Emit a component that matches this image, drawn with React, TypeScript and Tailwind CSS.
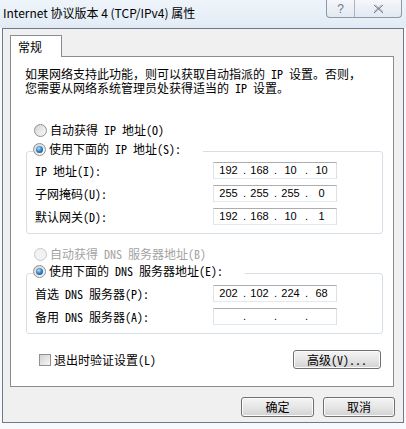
import React from "react";

const cjk = "font-['Noto_Sans_Mono_CJK_SC','Noto_Sans_CJK_SC',monospace]";

function Radio({ checked, disabled }: { checked?: boolean; disabled?: boolean }) {
  return (
    <span
      className={`flex h-[13px] w-[13px] shrink-0 items-center justify-center rounded-full border ${
        disabled
          ? "border-[#c8c8c8] bg-[#f2f2f2]"
          : "border-[#8e8f8f] bg-linear-to-br from-[#d4d4d4] to-[#fbfbfb]"
      }`}
    >
      {checked && (
        <span className="h-[7px] w-[7px] rounded-full bg-[radial-gradient(circle_at_40%_35%,#b6e1fb,#3a86c8_45%,#0d3a6c)]" />
      )}
    </span>
  );
}

function Checkbox() {
  return (
    <span className="h-[12px] w-[12px] shrink-0 border border-[#8e8f8f] bg-linear-to-br from-[#d2d2d2] to-[#f6f6f6]" />
  );
}

function IpBox({ parts }: { parts: string[] }) {
  return (
    <div className="flex h-[17px] w-[124px] items-center border border-[#abadb3] border-b-[#e3e9ef] border-l-[#e2e3ea] border-r-[#dbdfe6] bg-white pl-[1px] font-['Liberation_Sans',sans-serif] text-[11px] text-black">
      {parts.map((p, i) => (
        <React.Fragment key={i}>
          {i > 0 && <span className="w-[4px] text-right leading-none">.</span>}
          <span className="w-[27px] text-center leading-none">{p}</span>
        </React.Fragment>
      ))}
    </div>
  );
}

function Field({ label, parts }: { label: string; parts: string[] }) {
  return (
    <div className="flex h-[17px] items-center justify-between pl-[8px] pr-[45px]">
      <span>{label}</span>
      <IpBox parts={parts} />
    </div>
  );
}

function Button({ children, className }: { children: React.ReactNode; className?: string }) {
  return (
    <button
      className={`flex h-[19px] items-center justify-center rounded-[3px] border border-[#707070] bg-linear-to-b from-[#f4f4f4] via-[#e6e6e6] to-[#d2d2d2] text-[12px] text-black shadow-[inset_0_0_0_1px_#fbfbfb] ${className ?? ""}`}
    >
      {children}
    </button>
  );
}

function GroupBox({ legend, children }: { legend: React.ReactNode; children: React.ReactNode }) {
  return (
    <fieldset className="ml-[15px] w-[357px] rounded-[3px] border border-[#d5dfe5] pb-[8px]">
      <legend className="ml-[6px] h-[20px] pr-[22px]">
        <span className="flex h-[16px] items-center gap-[3px] bg-white">{legend}</span>
      </legend>
      {children}
    </fieldset>
  );
}

export default function App() {
  return (
    <div className={`h-[429px] w-[406px] overflow-hidden bg-[#f7f9fc] text-[12px] text-black ${cjk}`}>
      {/* title bar */}
      <div className="flex h-[28px] items-start bg-linear-to-b from-[#eef4fa] to-[#e2ebf5] pl-[3px]">
        <span className="mt-[5px] font-['Noto_Sans_CJK_SC',sans-serif] text-[12px] leading-[16px] text-black">
          Internet 协议版本 4 (TCP/IPv4) 属性
        </span>
        <div className="ml-auto mr-[4px] flex h-[18px] overflow-hidden rounded-b-[4px] border border-t-0 border-[#8d98a8] bg-linear-to-b from-[#f4f7fb] to-[#e3e9f1]">
          <span className="flex w-[28px] items-center justify-center border-r border-[#a9b3c1] font-['Liberation_Sans',sans-serif] text-[12px] text-[#6c7787]">
            ?
          </span>
          <span className="flex w-[46px] items-center justify-center">
            <svg width="11" height="10" viewBox="0 0 11 10" fill="none" stroke="#6c7787" strokeWidth="1">
              <path d="M1 1 L10 9 M10 1 L1 9" />
              <path d="M2.5 1 L10 7.5 M8.5 1 L1 7.5" strokeOpacity="0.5" />
            </svg>
          </span>
        </div>
      </div>

      {/* dialog body */}
      <div className="mx-[2px] flex h-[395px] flex-col border border-[#6f7a88] bg-[#f0f0f0] pl-[7px] pt-[6px]">
        {/* tab strip */}
        <div className="relative z-10 -mb-[1px] flex h-[22px] w-[52px] items-center border border-b-0 border-[#898c95] bg-white pl-[7px]">
          常规
        </div>

        {/* tab page */}
        <div className="flex h-[331px] w-[384px] flex-col border border-[#898c95] bg-white">
          <p className="pl-[14px] pt-[10px] leading-[14px]">
            如果网络支持此功能，则可以获取自动指派的 IP 设置。否则，
            <br />
            您需要从网络系统管理员处获得适当的 IP 设置。
          </p>

          <div className="ml-[23px] mt-[27px] flex h-[16px] items-center gap-[3px]">
            <Radio />
            <span>自动获得 IP 地址(O)</span>
          </div>

          <div className="mt-[3px]">
            <GroupBox
              legend={
                <>
                  <Radio checked />
                  <span>使用下面的 IP 地址(S):</span>
                </>
              }
            >
              <div className="mt-[1px] flex flex-col gap-[6px]">
                <Field label="IP 地址(I):" parts={["192", "168", "10", "10"]} />
                <Field label="子网掩码(U):" parts={["255", "255", "255", "0"]} />
                <Field label="默认网关(D):" parts={["192", "168", "10", "1"]} />
              </div>
            </GroupBox>
          </div>

          <div className="ml-[23px] mt-[12px] flex h-[16px] items-center gap-[3px] text-[#a3a3a3]">
            <Radio disabled />
            <span>自动获得 DNS 服务器地址(B)</span>
          </div>

          <div className="mt-[1px]">
            <GroupBox
              legend={
                <>
                  <Radio checked />
                  <span>使用下面的 DNS 服务器地址(E):</span>
                </>
              }
            >
              <div className="mt-[2px] flex flex-col gap-[6px]">
                <Field label="首选 DNS 服务器(P):" parts={["202", "102", "224", "68"]} />
                <Field label="备用 DNS 服务器(A):" parts={["", "", "", ""]} />
              </div>
            </GroupBox>
          </div>

          <div className="mt-[16px] flex h-[19px] items-center justify-between pl-[28px] pr-[12px]">
            <div className="flex items-center gap-[3px]">
              <Checkbox />
              <span>退出时验证设置(L)</span>
            </div>
            <Button className="w-[88px]">高级(V)...</Button>
          </div>
        </div>

        {/* dialog buttons */}
        <div className="mt-[10px] flex w-[385px] justify-end gap-[9px]">
          <Button className="h-[20px] w-[73px]">确定</Button>
          <Button className="h-[20px] w-[72px]">取消</Button>
        </div>
      </div>
    </div>
  );
}
